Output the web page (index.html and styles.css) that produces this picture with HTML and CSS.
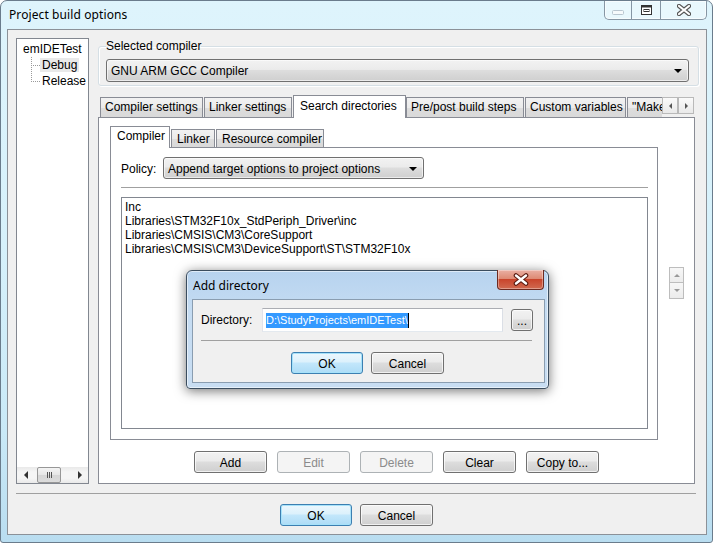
FILE: index.html
```html
<!DOCTYPE html>
<html lang="en">
<head>
    <meta charset="UTF-8">
    <title>Project build options</title>
    <link rel="stylesheet" href="styles.css">
</head>
<body>

<div class="window">
    <!-- title bar -->
    <div class="titlebar">
        <span class="title">Project build options</span>
        <div class="caption">
            <span class="cap cap-min">
                <svg width="12" height="5"><rect x="0.5" y="0.5" width="11" height="4" rx="1" fill="#f6fafc" stroke="#b9c6d0"/></svg>
            </span>
            <span class="cap cap-max">
                <svg width="11" height="10"><rect x="0.5" y="0.5" width="10" height="9" fill="#fff" stroke="#333"/><rect x="0.5" y="0.5" width="10" height="2" fill="#333"/><rect x="3" y="4.5" width="5" height="2" fill="none" stroke="#333"/></svg>
            </span>
            <span class="cap cap-close">
                <svg width="14" height="12"><path d="M2 2 L12 10 M12 2 L2 10" stroke="#555" stroke-width="4.4" stroke-linecap="round"/><path d="M2 2 L12 10 M12 2 L2 10" stroke="#fff" stroke-width="2.2" stroke-linecap="round"/></svg>
            </span>
        </div>
    </div>

    <div class="client">
        <div class="main">
            <!-- target tree -->
            <div class="tree">
                <div class="tree-items">
                    <div class="node root">emIDETest</div>
                    <div class="node child"><span class="branch"></span><span class="label sel">Debug</span></div>
                    <div class="node child last"><span class="branch"></span><span class="label">Release</span></div>
                </div>
                <div class="hscroll">
                    <span class="sb-arrow"><span class="tri-left"></span></span>
                    <span class="sb-thumb"><span class="grip"></span><span class="grip"></span><span class="grip"></span></span>
                    <span class="sb-track"></span>
                    <span class="sb-arrow"><span class="tri-right"></span></span>
                </div>
            </div>

            <div class="options">
                <fieldset class="group">
                    <legend>Selected compiler</legend>
                    <div class="combo compiler-combo">GNU ARM GCC Compiler<span class="combo-arrow"></span></div>
                </fieldset>

                <div class="tabs">
                    <div class="tab-list">
                        <div class="tab" style="width:103px">Compiler settings</div>
                        <div class="tab" style="width:88px">Linker settings</div>
                        <div class="tab active" style="width:113px">Search directories</div>
                        <div class="tab" style="width:118px">Pre/post build steps</div>
                        <div class="tab" style="width:101px">Custom variables</div>
                        <div class="tab" style="width:90px">"Make" commands</div>
                    </div>
                    <span class="tab-scroll"><span class="tri-left small"></span></span>
                    <span class="tab-scroll"><span class="tri-right small"></span></span>
                </div>

                <div class="tab-panel">
                    <div class="sub-row">
                        <div class="sub">
                            <div class="subtabs">
                                <div class="subtab active" style="width:60px">Compiler</div>
                                <div class="subtab" style="width:44px">Linker</div>
                                <div class="subtab" style="width:108px">Resource compiler</div>
                            </div>
                            <div class="subpanel">
                                <div class="policy">
                                    <span class="policy-label">Policy:</span>
                                    <div class="combo policy-combo">Append target options to project options<span class="combo-arrow"></span></div>
                                </div>
                                <div class="sep"></div>
                                <div class="dirlist">
                                    <div>Inc</div>
                                    <div>Libraries\STM32F10x_StdPeriph_Driver\inc</div>
                                    <div>Libraries\CMSIS\CM3\CoreSupport</div>
                                    <div>Libraries\CMSIS\CM3\DeviceSupport\ST\STM32F10x</div>
                                </div>
                            </div>
                        </div>
                        <div class="spin">
                            <span class="spin-btn"><span class="tri-up"></span></span>
                            <span class="spin-btn"><span class="tri-down"></span></span>
                        </div>
                    </div>

                    <div class="btn-row">
                        <button class="btn">Add</button>
                        <button class="btn disabled">Edit</button>
                        <button class="btn disabled">Delete</button>
                        <button class="btn">Clear</button>
                        <button class="btn">Copy to...</button>
                    </div>
                </div>
            </div>
        </div>

        <div class="footer">
            <div class="sep footer-sep"></div>
            <div class="footer-btns">
                <button class="btn default" style="width:72px">OK</button>
                <button class="btn" style="width:73px">Cancel</button>
            </div>
        </div>
    </div>

    <!-- modal dialog on top -->
    <div class="dialog">
        <div class="dlg-titlebar">
            <span class="dlg-title">Add directory</span>
            <span class="dlg-close">
                <svg width="16" height="13"><path d="M3 2.5 L13 10.5 M13 2.5 L3 10.5" stroke="#5a1a10" stroke-width="4.6" stroke-linecap="round"/><path d="M3 2.5 L13 10.5 M13 2.5 L3 10.5" stroke="#fff" stroke-width="2.4" stroke-linecap="round"/></svg>
            </span>
        </div>
        <div class="dlg-client">
            <div class="dir-row">
                <span class="dir-label">Directory:</span>
                <div class="textbox"><span class="selected">D:\StudyProjects\emIDETest\</span><span class="caret"></span></div>
                <button class="btn dots">...</button>
            </div>
            <div class="sep dlg-sep"></div>
            <div class="dlg-btns">
                <button class="btn default" style="width:72px">OK</button>
                <button class="btn" style="width:73px">Cancel</button>
            </div>
        </div>
    </div>
</div>

</body>
</html>
```

FILE: styles.css
```css
* {
    box-sizing: border-box;
}
body {
    margin: 0;
    font-family: "Liberation Sans", Arial, sans-serif;
    font-size: 12px;
    color: #000;
    background: #fff;
}
.window {
    position: relative;
    width: 713px;
    height: 543px;
    border: 1px solid #6a7c8c;
    border-radius: 7px 7px 3px 3px;
    background: linear-gradient(to bottom, #def4fc 0, #d6f1fb 45%, #c9e9f7 80%, #b9ddf0 100%);
    display: flex;
    flex-direction: column;
    overflow: hidden;
}

/* title bar */
.titlebar {
    height: 28px;
    display: flex;
    align-items: flex-start;
}
.title {
    font-family: "Noto Sans", "Liberation Sans", sans-serif;
    font-size: 12px;
    line-height: 27px;
    padding-left: 8px;
    letter-spacing: 0.1px;
}
.caption {
    margin-left: auto;
    margin-right: 5px;
    height: 19px;
    display: flex;
    border: 1px solid #8696a4;
    border-top: none;
    border-radius: 0 0 5px 5px;
    background: rgba(255, 255, 255, 0.35);
    box-shadow: inset 0 0 0 1px rgba(255, 255, 255, 0.6);
}
.cap {
    display: flex;
    align-items: center;
    justify-content: center;
    height: 100%;
}
.cap-min { width: 26px; padding-top: 4px; }
.cap-max { width: 29px; border-left: 1px solid #8696a4; }
.cap-close { width: 46px; border-left: 1px solid #8696a4; }

/* client area */
.client {
    margin: 0 5px 0 6px;
    height: 506px;
    border: 1px solid #8b9198;
    background: #f0f0f0;
    display: flex;
    flex-direction: column;
}
.main {
    display: flex;
    padding: 8px 0 0 8px;
    height: 454px;
}

/* tree */
.tree {
    width: 73px;
    height: 446px;
    border: 1px solid #828790;
    background: #fff;
    display: flex;
    flex-direction: column;
}
.tree-items {
    flex: 1;
    padding-top: 2px;
}
.node {
    height: 16px;
    line-height: 16px;
    white-space: nowrap;
}
.root {
    padding-left: 6px;
}
.child {
    display: flex;
    align-items: center;
}
.branch {
    width: 9px;
    height: 16px;
    margin-left: 14px;
    background:
        repeating-linear-gradient(to bottom, #9a9a9a 0 1px, transparent 1px 2px) left top / 1px 100% no-repeat,
        repeating-linear-gradient(to right, #9a9a9a 0 1px, transparent 1px 2px) left 8px / 9px 1px no-repeat;
}
.last .branch {
    background:
        repeating-linear-gradient(to bottom, #9a9a9a 0 1px, transparent 1px 2px) left top / 1px 9px no-repeat,
        repeating-linear-gradient(to right, #9a9a9a 0 1px, transparent 1px 2px) left 8px / 9px 1px no-repeat;
}
.label {
    padding: 0 2px;
    line-height: 14px;
}
.label.sel {
    background: #e9e9e9;
}
.hscroll {
    height: 16px;
    display: flex;
    background: linear-gradient(to bottom, #e9e9e9, #f5f5f5 30%, #f5f5f5 70%, #e9e9e9);
}
.sb-arrow {
    width: 17px;
    display: flex;
    align-items: center;
    justify-content: center;
}
.sb-thumb {
    width: 24px;
    margin: 0 0 0 3px;
    border: 1px solid #979797;
    border-radius: 2px;
    background: linear-gradient(to bottom, #f4f4f4, #e6e6e6 50%, #d6d6d6 51%, #dcdcdc);
    display: flex;
    align-items: center;
    justify-content: center;
    gap: 1px;
}
.grip {
    width: 1px;
    height: 6px;
    background: #555;
}
.sb-track {
    flex: 1;
}
.tri-left {
    border-top: 4px solid transparent;
    border-bottom: 4px solid transparent;
    border-right: 4px solid #333;
}
.tri-right {
    border-top: 4px solid transparent;
    border-bottom: 4px solid transparent;
    border-left: 4px solid #333;
}
.tri-left.small, .tri-right.small {
    border-top-width: 3px;
    border-bottom-width: 3px;
    border-left-color: #555;
    border-right-color: #555;
}
.tri-left.small { border-right-width: 3px; }
.tri-right.small { border-left-width: 3px; }
.tri-up {
    border-left: 3px solid transparent;
    border-right: 3px solid transparent;
    border-bottom: 3px solid #999;
}
.tri-down {
    border-left: 3px solid transparent;
    border-right: 3px solid transparent;
    border-top: 3px solid #999;
}

/* right side */
.options {
    width: 601px;
    margin-left: 9px;
    display: flex;
    flex-direction: column;
}
.group {
    margin: 1px 0 0;
    padding: 0 9px 3px 7px;
    border: 1px solid #d5dfe5;
    border-radius: 3px;
    box-shadow: inset 1px 1px 0 #fff, 1px 1px 0 #fff;
}
.group legend {
    padding: 0;
    line-height: 14px;
}
.combo {
    height: 23px;
    border: 1px solid #707070;
    border-radius: 3px;
    background: linear-gradient(to bottom, #f2f2f2 0, #ebebeb 45%, #dddddd 50%, #cfcfcf 100%);
    box-shadow: inset 0 0 0 1px rgba(255, 255, 255, 0.6);
    display: flex;
    align-items: center;
    padding: 1px 0 0 4px;
    white-space: nowrap;
}
.compiler-combo {
    margin-top: 6px;
}
.combo-arrow {
    margin-left: auto;
    margin-right: 6px;
    border-left: 4px solid transparent;
    border-right: 4px solid transparent;
    border-top: 4px solid #000;
}

/* tabs */
.tabs {
    margin-top: 9px;
    height: 22px;
    display: flex;
    align-items: flex-start;
    position: relative;
    z-index: 1;
}
.tab-list {
    width: 564px;
    display: flex;
    align-items: flex-start;
    padding-left: 2px;
    overflow: hidden;
    height: 23px;
}
.tab {
    flex: none;
    height: 20px;
    margin-top: 2px;
    margin-right: 1px;
    border: 1px solid #898c95;
    border-bottom: none;
    background: linear-gradient(to bottom, #f2f2f2, #ebebeb 50%, #dddddd 51%, #d9d9d9);
    line-height: 19px;
    padding-left: 4px;
    white-space: nowrap;
    overflow: hidden;
}
.tab.active {
    height: 23px;
    margin-top: 0;
    margin-right: 0;
    background: #fff;
    line-height: 20px;
    padding-left: 6px;
}
.tab-scroll {
    width: 16px;
    height: 17px;
    margin-top: 2px;
    border: 1px solid #b9b9b9;
    background: linear-gradient(to bottom, #fafafa, #e9e9e9);
    display: flex;
    align-items: center;
    justify-content: center;
}
.tab-panel {
    width: 597px;
    height: 367px;
    border: 1px solid #898c95;
    background: #fff;
    padding: 8px 0 0 11px;
}
.sub-row {
    display: flex;
    align-items: flex-start;
}
.subtabs {
    height: 21px;
    display: flex;
    align-items: flex-start;
    position: relative;
    z-index: 1;
}
.subtab {
    height: 18px;
    margin-top: 3px;
    margin-left: 1px;
    border: 1px solid #898c95;
    border-bottom: none;
    background: linear-gradient(to bottom, #f2f2f2, #ebebeb 50%, #dddddd 51%, #d9d9d9);
    line-height: 18px;
    padding-left: 5px;
    white-space: nowrap;
}
.subtab.active {
    height: 22px;
    margin-top: 0;
    margin-left: 0;
    background: #fff;
    line-height: 19px;
    padding-left: 6px;
}
.subpanel {
    width: 548px;
    height: 293px;
    border: 1px solid #898c95;
    padding: 9px 9px 0 10px;
}
.policy {
    display: flex;
    align-items: center;
    height: 22px;
}
.policy-label {
    width: 42px;
    padding-top: 1px;
}
.policy-combo {
    width: 261px;
    height: 22px;
    padding-left: 4px;
}
.sep {
    height: 1px;
    background: #a0a0a0;
}
.subpanel .sep {
    margin-top: 8px;
}
.dirlist {
    margin-top: 9px;
    height: 232px;
    border: 1px solid #828790;
    padding: 2px 3px;
    line-height: 14px;
}
.spin {
    margin: 141px 0 0 11px;
    display: flex;
    flex-direction: column;
}
.spin-btn {
    width: 15px;
    height: 16px;
    border: 1px solid #bdbdbd;
    background: linear-gradient(to bottom, #f7f7f7, #ececec);
    display: flex;
    align-items: center;
    justify-content: center;
}
.spin-btn + .spin-btn {
    border-top: none;
}

/* buttons */
.btn {
    height: 22px;
    padding: 1px 0 0;
    font: inherit;
    color: #000;
    border: 1px solid #707070;
    border-radius: 3px;
    background: linear-gradient(to bottom, #f2f2f2 0, #ebebeb 45%, #dddddd 50%, #cfcfcf 100%);
    box-shadow: inset 0 0 0 1px rgba(255, 255, 255, 0.7);
}
.btn.default {
    border-color: #3c7fb1;
    background: linear-gradient(to bottom, #ecf7fd 0, #dcf1fc 45%, #c3e7fb 50%, #addcf6 100%);
    box-shadow: inset 0 0 0 1px #a6e2fa;
}
.btn.disabled {
    border-color: #adb2b5;
    background: #f4f4f4;
    color: #8b8b8b;
    box-shadow: none;
}
.btn-row {
    margin: 11px 0 0 84px;
    display: flex;
    gap: 10px;
}
.btn-row .btn {
    width: 73px;
}

/* footer */
.footer-sep {
    margin: 9px 10px 0 8px;
}
.footer-btns {
    margin-top: 10px;
    display: flex;
    justify-content: center;
    gap: 8px;
    padding-right: 1px;
}

/* Add directory dialog */
.dialog {
    position: absolute;
    left: 185px;
    top: 269px;
    width: 363px;
    height: 119px;
    border: 1px solid #3b4d5f;
    border-radius: 6px 6px 4px 4px;
    background: linear-gradient(to bottom, #b7d3ef 0, #c5dcf2 35%, #c8ddf2 100%);
    box-shadow: 0 2px 12px rgba(0, 0, 0, 0.55), inset 0 0 0 1px rgba(255, 255, 255, 0.55);
    display: flex;
    flex-direction: column;
}
.dlg-titlebar {
    height: 28px;
    display: flex;
    align-items: flex-start;
}
.dlg-title {
    font-family: "Noto Sans", "Liberation Sans", sans-serif;
    font-size: 12px;
    line-height: 29px;
    padding-left: 6px;
}
.dlg-close {
    margin-left: auto;
    margin-right: 4px;
    width: 47px;
    height: 20px;
    margin-top: -1px;
    border: 1px solid #6d2a20;
    border-top: none;
    border-radius: 0 0 4px 4px;
    background: linear-gradient(to bottom, #eab0a3 0, #de8a74 45%, #c9452c 50%, #d06a50 100%);
    box-shadow: inset 0 0 0 1px rgba(255, 255, 255, 0.35);
    display: flex;
    align-items: center;
    justify-content: center;
}
.dlg-client {
    margin: 0 3px 0 5px;
    height: 84px;
    border: 1px solid #8a9db0;
    background: #f0f0f0;
    padding: 8px 0 0 8px;
}
.dir-row {
    display: flex;
    align-items: center;
}
.dir-label {
    width: 61px;
}
.textbox {
    width: 241px;
    height: 24px;
    border: 1px solid #abadb3;
    border-color: #abadb3 #dbdfe6 #e3e9ef #e2e3ea;
    background: #fff;
    padding-left: 3px;
    display: flex;
    align-items: center;
    font-size: 11px;
}
.selected {
    background: #3399ff;
    color: #fff;
    line-height: 15px;
}
.caret {
    width: 1px;
    height: 15px;
    background: #000;
}
.btn.dots {
    width: 22px;
    margin-left: 8px;
    line-height: 14px;
}
.dlg-sep {
    width: 331px;
    margin-top: 8px;
}
.dlg-btns {
    margin: 11px 0 0 90px;
    display: flex;
    gap: 8px;
}
```
